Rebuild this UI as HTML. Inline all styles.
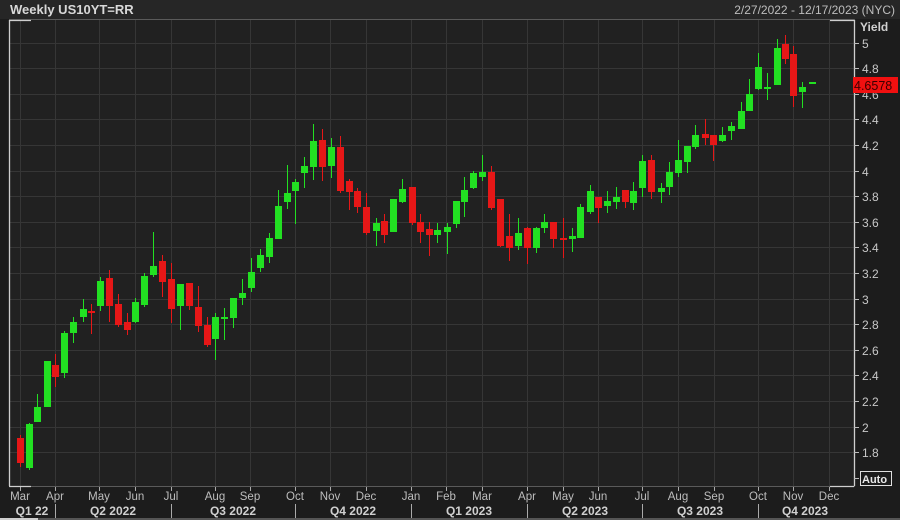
<!DOCTYPE html>
<html><head><meta charset="utf-8"><style>
html,body{margin:0;padding:0;background:#1c1c1c;width:900px;height:520px;overflow:hidden}
svg{display:block}
text{font-family:"Liberation Sans",sans-serif}
</style></head><body>
<svg width="900" height="520" viewBox="0 0 900 520" xmlns="http://www.w3.org/2000/svg">
<rect width="900" height="520" fill="#1c1c1c"/>
<rect width="900" height="19" fill="#262626"/>
<text x="10" y="14" font-size="13" font-weight="bold" fill="#d8d8d8">Weekly US10YT=RR</text>
<text x="895" y="14" font-size="12" fill="#bdbdbd" text-anchor="end">2/27/2022 - 12/17/2023 (NYC)</text>
<rect x="9" y="20" width="845" height="466" fill="#212121"/>
<path stroke="#363636" fill="none" d="M9 43.5H854M9 68.5H854M9 94.5H854M9 119.5H854M9 145.5H854M9 171.5H854M9 196.5H854M9 222.5H854M9 247.5H854M9 273.5H854M9 299.5H854M9 324.5H854M9 350.5H854M9 375.5H854M9 401.5H854M9 427.5H854M9 452.5H854"/>
<path stroke="#363636" fill="none" d="M20.5 20V486M55.5 20V486M99.5 20V486M135.5 20V486M171.5 20V486M215.5 20V486M250.5 20V486M295.5 20V486M330.5 20V486M366.5 20V486M411.5 20V486M446.5 20V486M482.5 20V486M527.5 20V486M563.5 20V486M598.5 20V486M642.5 20V486M678.5 20V486M714.5 20V486M758.5 20V486M793.5 20V486M829.5 20V486"/>
<rect x="9.5" y="19.5" width="845" height="467" fill="none" stroke="#5a5a5a"/>
<path stroke="#cfcfcf" stroke-width="1.3" fill="none" d="M9.5 20V486M9 20.5H31M9 486.5H31M830 20.5H854M830 486.5H854M854.5 20V486"/>
<path stroke="#e61717" fill="none" d="M20.5 435V467M55.5 354V387M91.5 304V334M109.5 270V322M118.5 294V327M127.5 313V335M162.5 255V297M171.5 263V323M189.5 283V310M198.5 286V332M207.5 317V347M322.5 129V181M340.5 136V193M349.5 179V210M357.5 188V213M366.5 193V235M384.5 214V243M412.5 187V225M420.5 214V243M429.5 222V256M491.5 166V210M500.5 199V247M509.5 214V261M527.5 227V264M553.5 222V248M563.5 218V258M598.5 197V223M625.5 190V208M651.5 155V199M705.5 119V145M713.5 135V161M785.5 35V64M793.5 46V107"/>
<path fill="#e61717" d="M17 438h7v25h-7zM52 365h7v12h-7zM88 311h7v2h-7zM106 278h7v28h-7zM115 304h7v21h-7zM124 322h7v8h-7zM159 261h7v21h-7zM168 279h7v30h-7zM186 283h7v23h-7zM195 307h7v19h-7zM204 325h7v20h-7zM319 140h7v27h-7zM337 147h7v44h-7zM346 181h7v11h-7zM354 191h7v16h-7zM363 207h7v26h-7zM381 221h7v14h-7zM409 187h7v36h-7zM417 222h7v10h-7zM426 229h7v6h-7zM488 172h7v36h-7zM497 199h7v47h-7zM506 236h7v12h-7zM524 228h7v20h-7zM550 222h7v17h-7zM560 238h7v2h-7zM595 197h7v11h-7zM622 190h7v12h-7zM648 160h7v32h-7zM702 134h7v4h-7zM710 135h7v10h-7zM782 44h7v15h-7zM790 54h7v42h-7z"/>
<path stroke="#22e022" fill="none" d="M29.5 423V470M37.5 394V422M47.5 361V407M64.5 331V378M73.5 317V343M83.5 299V322M100.5 277V311M135.5 298V323M144.5 273V307M153.5 232V277M180.5 284V330M215.5 313V360M224.5 308V340M233.5 298V328M242.5 279V305M251.5 258V292M260.5 249V272M269.5 233V263M278.5 190V239M287.5 165V209M295.5 179V224M304.5 157V188M313.5 124V180M331.5 138V178M376.5 218V246M393.5 199V232M402.5 179V203M437.5 223V243M447.5 223V254M456.5 201V228M464.5 177V217M473.5 171V189M482.5 155V181M518.5 218V250M536.5 227V253M544.5 214V233M572.5 228V252M580.5 204V238M590.5 185V214M607.5 191V213M616.5 187V209M633.5 182V210M642.5 155V197M661.5 183V203M669.5 162V195M678.5 140V177M687.5 146V173M695.5 125V149M722.5 127V142M731.5 122V140M741.5 102V129M749.5 79V111M758.5 53V90M767.5 73V100M777.5 39V85M802.5 82V108"/>
<path fill="#22e022" d="M26 424h7v44h-7zM34 407h7v15h-7zM44 361h7v46h-7zM61 333h7v40h-7zM70 322h7v11h-7zM80 309h7v8h-7zM97 281h7v25h-7zM132 302h7v20h-7zM141 276h7v29h-7zM150 266h7v9h-7zM177 284h7v22h-7zM212 317h7v22h-7zM221 317h7v2h-7zM230 298h7v20h-7zM239 293h7v5h-7zM248 272h7v16h-7zM257 255h7v13h-7zM266 238h7v19h-7zM275 206h7v33h-7zM284 193h7v9h-7zM292 182h7v9h-7zM301 166h7v7h-7zM310 141h7v26h-7zM328 147h7v19h-7zM373 223h7v8h-7zM390 199h7v33h-7zM399 189h7v13h-7zM434 230h7v5h-7zM444 227h7v5h-7zM453 201h7v23h-7zM461 190h7v12h-7zM470 173h7v15h-7zM479 172h7v5h-7zM515 233h7v13h-7zM533 228h7v20h-7zM541 222h7v6h-7zM569 236h7v3h-7zM577 207h7v31h-7zM587 191h7v21h-7zM604 201h7v5h-7zM613 197h7v5h-7zM630 191h7v12h-7zM639 161h7v27h-7zM658 188h7v4h-7zM666 172h7v15h-7zM675 160h7v13h-7zM684 146h7v16h-7zM692 135h7v12h-7zM719 135h7v6h-7zM728 126h7v5h-7zM738 111h7v18h-7zM746 94h7v17h-7zM755 67h7v22h-7zM764 87h7v2h-7zM774 48h7v37h-7zM799 87h7v5h-7zM809 82h7v2h-7z"/>
<path stroke="#bdbdbd" fill="none" d="M854 43.5h5M854 68.5h5M854 94.5h5M854 119.5h5M854 145.5h5M854 171.5h5M854 196.5h5M854 222.5h5M854 247.5h5M854 273.5h5M854 299.5h5M854 324.5h5M854 350.5h5M854 375.5h5M854 401.5h5M854 427.5h5M854 452.5h5M854 478.5h5"/>
<text x="860" y="31" font-size="12" font-weight="bold" fill="#d0d0d0">Yield</text>
<g font-size="12" fill="#c8c8c8">
<text x="862" y="48">5</text><text x="862" y="73">4.8</text><text x="862" y="99">4.6</text><text x="862" y="124">4.4</text><text x="862" y="150">4.2</text><text x="862" y="176">4</text><text x="862" y="201">3.8</text><text x="862" y="227">3.6</text><text x="862" y="252">3.4</text><text x="862" y="278">3.2</text><text x="862" y="304">3</text><text x="862" y="329">2.8</text><text x="862" y="355">2.6</text><text x="862" y="380">2.4</text><text x="862" y="406">2.2</text><text x="862" y="432">2</text><text x="862" y="457">1.8</text>
</g>
<rect x="853" y="77" width="45" height="16" fill="#f01010"/>
<text x="854" y="90" font-size="12.5" fill="#3a0000">4.6578</text>
<rect x="860.5" y="471.5" width="31" height="14" fill="#1c1c1c" stroke="#e0e0e0"/>
<text x="862" y="483" font-size="11" font-weight="bold" fill="#e8e8e8">Auto</text>
<path stroke="#aaaaaa" fill="none" d="M20.5 487v4M55.5 487v4M99.5 487v4M135.5 487v4M171.5 487v4M215.5 487v4M250.5 487v4M295.5 487v4M330.5 487v4M366.5 487v4M411.5 487v4M446.5 487v4M482.5 487v4M527.5 487v4M563.5 487v4M598.5 487v4M642.5 487v4M678.5 487v4M714.5 487v4M758.5 487v4M793.5 487v4M829.5 487v4M55.5 504v14M171.5 504v14M295.5 504v14M411.5 504v14M527.5 504v14M642.5 504v14M758.5 504v14"/>
<g font-size="11.5" fill="#bdbdbd" text-anchor="middle">
<text x="20" y="500">Mar</text><text x="55" y="500">Apr</text><text x="99" y="500">May</text><text x="135" y="500">Jun</text><text x="171" y="500">Jul</text><text x="215" y="500">Aug</text><text x="250" y="500">Sep</text><text x="295" y="500">Oct</text><text x="330" y="500">Nov</text><text x="366" y="500">Dec</text><text x="411" y="500">Jan</text><text x="446" y="500">Feb</text><text x="482" y="500">Mar</text><text x="527" y="500">Apr</text><text x="563" y="500">May</text><text x="598" y="500">Jun</text><text x="642" y="500">Jul</text><text x="678" y="500">Aug</text><text x="714" y="500">Sep</text><text x="758" y="500">Oct</text><text x="793" y="500">Nov</text><text x="829" y="500">Dec</text>
</g>
<g font-size="12" font-weight="bold" fill="#d0d0d0" text-anchor="middle">
<text x="32" y="515">Q1 22</text><text x="113" y="515">Q2 2022</text><text x="233" y="515">Q3 2022</text><text x="353" y="515">Q4 2022</text><text x="469" y="515">Q1 2023</text><text x="585" y="515">Q2 2023</text><text x="700" y="515">Q3 2023</text><text x="805" y="515">Q4 2023</text>
</g>
<rect x="0" y="518" width="900" height="2" fill="#555"/>
<rect x="0" y="518" width="38" height="2" fill="#cfcfcf"/>
</svg>
</body></html>
